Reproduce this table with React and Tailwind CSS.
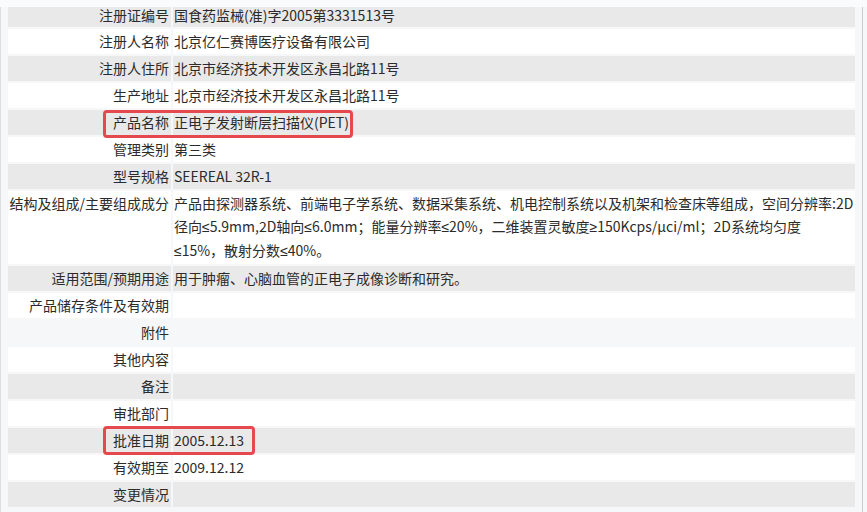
const rows = [
  { label: "注册证编号", value: "国食药监械(准)字2005第3331513号", bg: "gray", first: true },
  { label: "注册人名称", value: "北京亿仁赛博医疗设备有限公司", bg: "white" },
  { label: "注册人住所", value: "北京市经济技术开发区永昌北路11号", bg: "gray" },
  { label: "生产地址", value: "北京市经济技术开发区永昌北路11号", bg: "white" },
  { label: "产品名称", value: "正电子发射断层扫描仪(PET)", bg: "gray" },
  { label: "管理类别", value: "第三类", bg: "white" },
  { label: "型号规格", value: "SEEREAL 32R-1", bg: "gray" },
  {
    label: "结构及组成/主要组成成分",
    lines: [
      "产品由探测器系统、前端电子学系统、数据采集系统、机电控制系统以及机架和检查床等组成，空间分辨率:2D",
      "径向≤5.9mm,2D轴向≤6.0mm；能量分辨率≤20%，二维装置灵敏度≥150Kcps/µci/ml；2D系统均匀度",
      "≤15%，散射分数≤40%。",
    ],
    bg: "white",
  },
  { label: "适用范围/预期用途", value: "用于肿瘤、心脑血管的正电子成像诊断和研究。", bg: "gray" },
  { label: "产品储存条件及有效期", value: "", bg: "white" },
  { label: "附件", value: "", bg: "none" },
  { label: "其他内容", value: "", bg: "white" },
  { label: "备注", value: "", bg: "gray" },
  { label: "审批部门", value: "", bg: "white" },
  { label: "批准日期", value: "2005.12.13", bg: "gray" },
  { label: "有效期至", value: "2009.12.12", bg: "white" },
  { label: "变更情况", value: "", bg: "gray" },
];

const bgClass = {
  gray: "bg-[#e9e9e9]",
  white: "bg-white",
  none: "bg-transparent",
};

// narrow math signs like the reference's latin font
function Txt({ s }) {
  return s.split(/([≤≥])/).map((p, i) =>
    p === "≤" || p === "≥" ? (
      <span key={i} style={{ fontFamily: '"Liberation Sans", sans-serif' }}>
        {p}
      </span>
    ) : (
      p
    )
  );
}

function Row({ row }) {
  const cell = bgClass[row.bg];
  const size = row.first ? "h-[20px] leading-[16px]" : "py-px leading-[23px] min-h-[25px]";
  return (
    <div className="flex gap-[2px]">
      <div className={`w-[163px] shrink-0 text-right pr-[2px] ${size} ${cell}`}>{row.label}</div>
      <div className={`flex-1 pl-px ${size} ${cell}`}>
        {row.lines
          ? row.lines.map((l, i) => (
              <div key={i} className="whitespace-nowrap">
                <Txt s={l} />
              </div>
            ))
          : row.value}
      </div>
    </div>
  );
}

export default function App() {
  return (
    <div
      className="w-[867px] h-[512px] overflow-hidden bg-[#f6f7f9] text-[14px] text-[#2b2b2b] relative"
      style={{ fontFamily: '"Noto Sans CJK SC", "Noto Sans", sans-serif' }}
    >
      {/* top strip */}
      <div className="h-[7px] bg-[#fafbfc]" />

      <div className="flex h-[505px]">
        <div className="w-px bg-[#dedede]" />
        <div className="flex-1 px-[7px]">
          <div className="flex flex-col gap-[2px]">
            {rows.map((r, i) => (
              <Row key={i} row={r} />
            ))}
          </div>
        </div>
        <div className="w-px bg-[#cdcdcd]" />
        <div className="w-[4px]" />
      </div>

      {/* highlight boxes */}
      <div className="absolute left-[103px] top-[110px] w-[250px] h-[28px] border-[3px] border-[#e5484d] rounded-[4px]" />
      <div className="absolute left-[103px] top-[426px] w-[152px] h-[29px] border-[3px] border-[#e5484d] rounded-[4px]" />
    </div>
  );
}
